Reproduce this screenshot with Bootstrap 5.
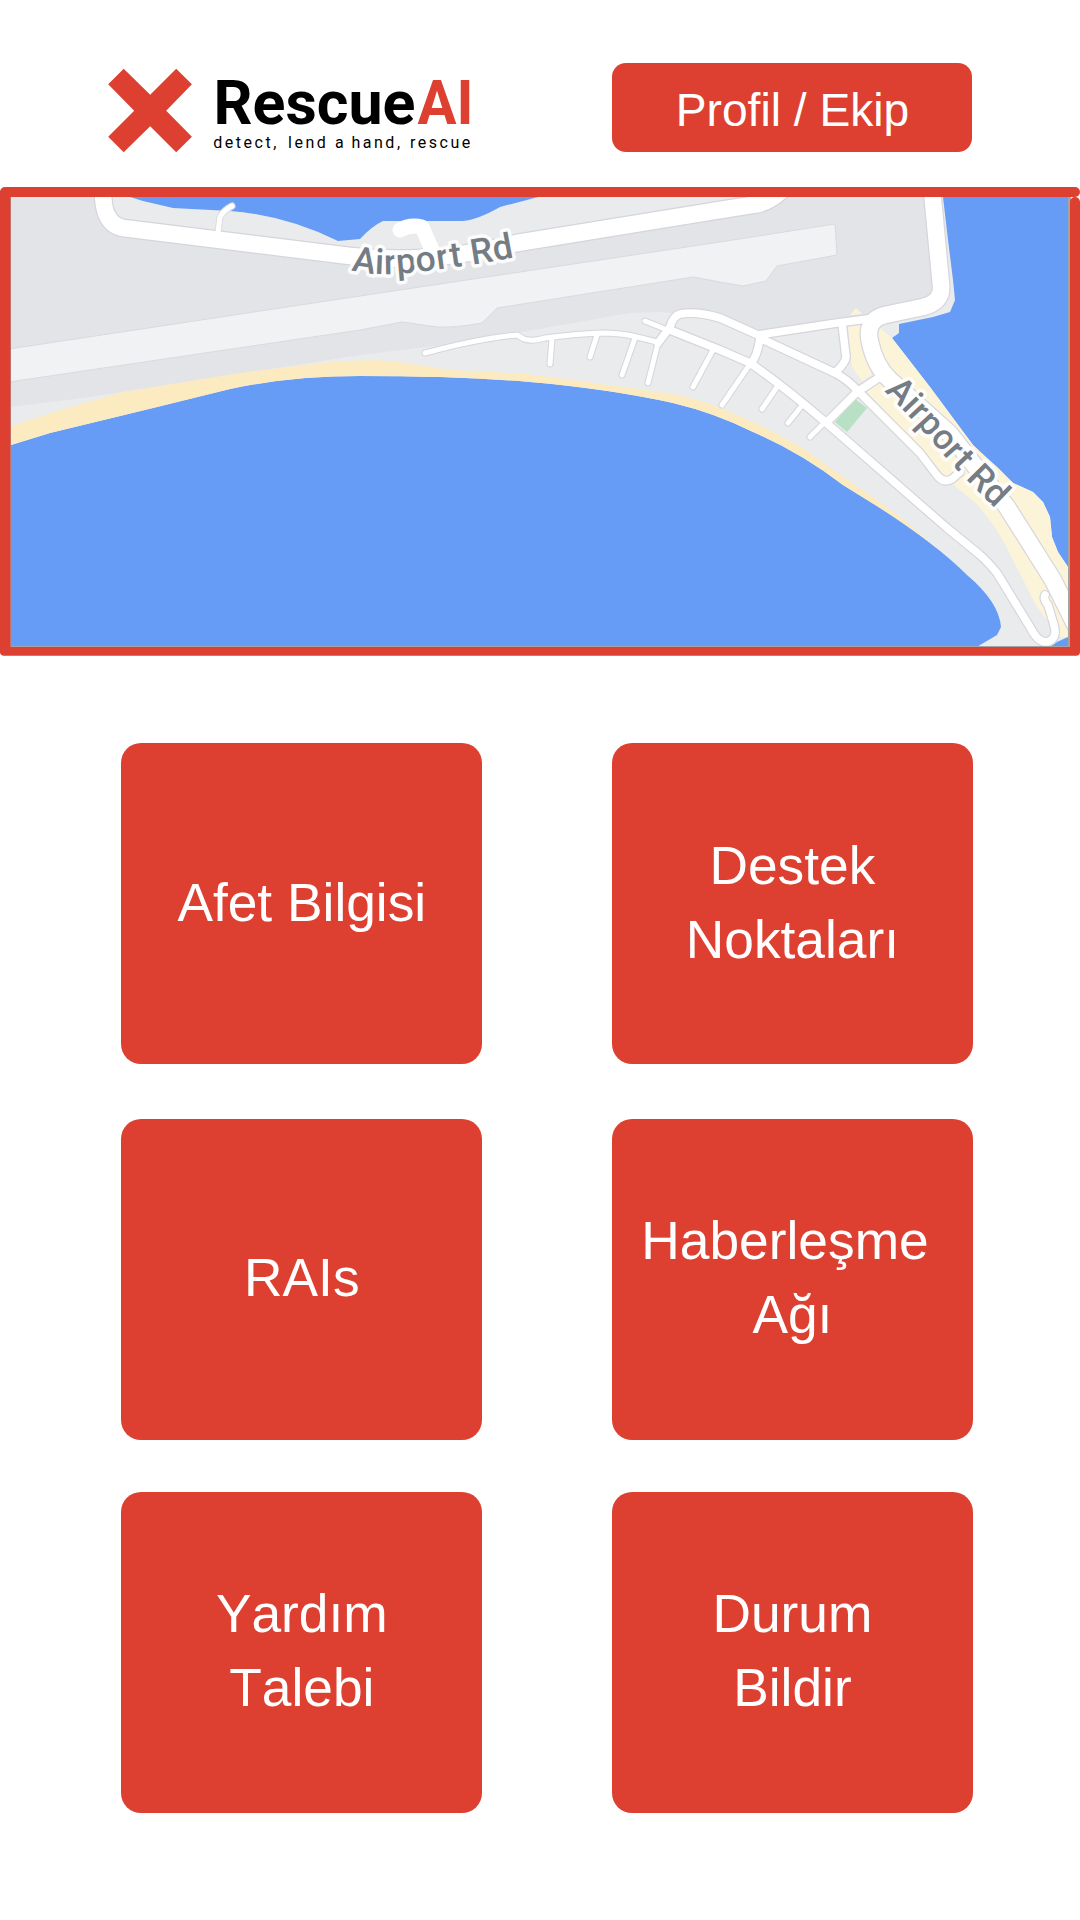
<!DOCTYPE html>
<html lang="tr">
<head>
<meta charset="utf-8">
<meta name="viewport" content="width=device-width, initial-scale=1">
<title>RescueAI</title>
<link href="https://cdn.jsdelivr.net/npm/bootstrap@5.3.0/dist/css/bootstrap.min.css" rel="stylesheet">
<style>
:root{--rescue:#dd4031}
body{font-family:"Liberation Sans",Arial,sans-serif;width:1080px;height:1920px;overflow:hidden}
.topbar{height:187px;padding:63px 108px 0}
.brand-logo{width:382px;height:90px;margin-top:5px;overflow:visible}
.btn-rescue{--bs-btn-color:#fff;--bs-btn-bg:var(--rescue);--bs-btn-border-width:0;--bs-btn-hover-bg:#c63527;--bs-btn-hover-color:#fff;--bs-btn-padding-x:0;--bs-btn-padding-y:0;--bs-btn-active-bg:#b92f22;font-kerning:none}
.btn-profile{width:360px;height:89.3px;font-size:46.2px;line-height:60px;--bs-btn-border-radius:14px;padding:4px 0 0 1px}
.map-view{height:469px}
.tiles{padding:87.3px 107.2px 0 121.4px}
.tile{width:360.8px;height:320.9px;font-size:53.3px;line-height:74px;--bs-btn-border-radius:20px;padding-bottom:2px}
.tile-row{margin-bottom:54.8px}
.tile-row + .tile-row{margin-bottom:52.100px}
</style>
</head>
<body class="bg-white">
<header class="topbar d-flex justify-content-between align-items-start">
<svg class="brand-logo" viewBox="108 68 382 90" role="img" aria-label="RescueAI">
<path fill="#dd4031" transform="translate(108.2 68.7)" d="M0 15.5 15.5 0 42 26 68 0 83.7 15.5 58 42 83.7 68 68 83.5 42 57.5 15.5 83.5 0 68 26 42Z"/>
<g font-family="Roboto, sans-serif">
<text y="124" font-weight="700" font-size="60.5"><tspan x="213.500" textLength="202" lengthAdjust="spacingAndGlyphs">Rescue</tspan><tspan x="417.5" fill="#dd4031" textLength="56" lengthAdjust="spacingAndGlyphs">AI</tspan></text>
<text y="147.7" font-size="16" letter-spacing="2.5"><tspan x="213.3">detect,</tspan> <tspan x="288">lend</tspan> <tspan x="335">a</tspan> <tspan x="351.500">hand,</tspan> <tspan x="410">rescue</tspan></text>
</g>
</svg>
<button class="btn btn-rescue btn-profile">Profil / Ekip</button>
</header>
<main>
<svg class="map-view d-block w-100" viewBox="0 187 1080 469">
<rect x="10" y="196" width="1060" height="452" fill="#669cf6"/>
<path fill="#e9ebed" d="M11 197H130L143 201 173 208 230 211Q285 215 338 241L360 239Q372 226 383 221H463Q477 220 500 207L538 197H943L948 240 953 280 955 300 950 312 933 317 899 324V333L892 338 930 387 973 445 987 459 997 467 1013 483 1033 492 1043 502 1050 517 1052 537 1058 552 1068 567V637L1057 642 1048 648H975L997 635 1001 627Q999 602 967 575 937 545 880 508L843 485Q800 452 753 432 715 413 673 403 610 389 530 382 460 376 360 376 290 376 230 389L153 408 50 433 11 445Z"/>
<path fill="#e3e4e8" d="M11 197H100L110 222 347 256 440 258 517 243 767 207 785 197H930L940 290 920 307 880 315 757 335 720 318 660 312 630 313 573 323 460 343 360 355 207 379 83 398 11 407Z"/>
<path fill="#f0f2f4" stroke="#d9dadf" d="M9 349 360 296 600 260 720 242 835 224 837 255 777 266 766 281 743 286 720 282 693 277 497 308 482 323Q455 328 437 327L402 322 360 330 9 382Z"/>
<path fill="#fcebc0" d="M11 426 67 408 123 392 240 373 320 363Q360 359 393 361L450 370 527 374 573 380 673 394Q697 399 720 408L760 425 803 448 830 468 867 493 907 522 938 549Q915 530 880 508L843 485Q800 452 753 432 715 413 673 403 610 389 530 382 460 376 360 376 290 376 230 389L153 408 50 433 11 445Z"/>
<g fill="#fcf4d9">
<path d="M880 328 892 338 930 387 973 445 997 467 1013 483 1033 492 1043 502 1050 517 1052 537 1058 552 1068 567V637H1060L1037 607 1013 560Q1000 532 987 517 975 500 957 488L927 457 867 392 880 380 870 350Z"/>
<path d="M848 327 863 324V353L872 375 862 381 852 367Z"/>
<path d="M856 308 862 314 850 315Z"/>
</g>
<path fill="#b8e0c4" d="M855 399 867 408 847 432 835 422Z"/>
<defs><g id="lanes" fill="none" stroke-linecap="round" stroke-linejoin="round">
<path d="M425 353Q480 338 517 335L524 339Q532 342 545 338 575 334 600 333 622 333 637 337L657 342M552 338 550 364M597 335 590 357M635 338 622 375M713 350 693 387M777 387 762 409M800 408 788 423M822 425 810 437M658 343 648 383M645 321 670 331M750 364 722 405"/></g>
<g id="streets" fill="none" stroke-linecap="round" stroke-linejoin="round">
<path d="M875 318 837 323 758 335 720 318Q697 311 680 314 673 316 670 327L658 343M670 330 720 350 750 363Q782 385 823 420L947 528 980 555Q988 562 997 573L1030 627Q1038 643 1047 642 1058 639 1054 625L1048 605Q1043 599 1045 595M760 338 835 373Q848 380 857 390L920 453 936 474Q943 484 952 479L960 472M880 377 857 392 827 422M842 323 846 357Q846 362 835 373M760 338Q757 358 750 364"/></g>
<g id="avenues" fill="none" stroke-linejoin="round">
<path d="M103 190Q103 208 107 215 112 226 123 228L350 256Q430 265 517 243L720 210 758 204Q769 202 782 190M932 190 941 285Q943 302 923 307L885 315Q865 320 870 342 875 366 890 380L950 434 1007 507 1053 580 1080 634"/></g></defs>
<path fill="none" stroke="#dddde2" stroke-width="7" stroke-linecap="round" stroke-linejoin="round" d="M218 232 220 217Q224 210 232 206"/>
<g stroke="#d5d5db"><use href="#lanes" stroke-width="7"/><use href="#streets" stroke-width="10"/><use href="#avenues" stroke-width="19"/></g>
<g stroke="#fff"><use href="#lanes" stroke-width="5"/><use href="#streets" stroke-width="7.6"/><use href="#avenues" stroke-width="16.6"/>
<path fill="none" stroke-width="5" stroke-linecap="round" d="M218 232 220 217Q224 210 232 206"/>
<path fill="none" stroke-width="15" stroke-linecap="round" stroke-linejoin="round" d="M400 230Q410 224 422 227L432 250"/></g>
<path id="airport-n" fill="none" d="M351 270C375 276 398 275 430 270.500S490 263 530 254"/>
<path id="airport-e" fill="none" d="M884 391Q918 425 942 453T1010 522"/>
<g font-family="Roboto, sans-serif" font-weight="500" font-size="35.5" fill="#747c84" stroke="#fff" stroke-opacity=".9" stroke-width="7" stroke-linejoin="round" paint-order="stroke">
<text><textPath href="#airport-n" textLength="165">Airport Rd</textPath></text>
<text><textPath href="#airport-e" textLength="162">Airport Rd</textPath></text>
</g>
<path fill="#a5a3a3" d="M1068 197h3v451h-3zM10 197h1v450h-1zM10 646h1060v1H10z"/>
<g fill="#dd4031"><rect y="187" width="1080" height="10" rx="5"/><rect y="191" width="10.500" height="462"/><rect x="1070" y="197" width="10" height="458" rx="5"/><rect y="647" width="1080" height="8.800" rx="4"/></g>
</svg>
<section class="tiles d-flex flex-column">
<div class="tile-row d-flex justify-content-between">
<button class="btn btn-rescue tile">Afet Bilgisi</button>
<button class="btn btn-rescue tile">Destek<br>Noktaları</button>
</div>
<div class="tile-row d-flex justify-content-between">
<button class="btn btn-rescue tile">RAIs</button>
<button class="btn btn-rescue tile">Haberleşme&nbsp;<br>Ağı</button>
</div>
<div class="tile-row d-flex justify-content-between">
<button class="btn btn-rescue tile">Yardım<br>Talebi</button>
<button class="btn btn-rescue tile">Durum<br>Bildir</button>
</div>
</section>
</main>
<script src="https://cdn.jsdelivr.net/npm/bootstrap@5.3.0/dist/js/bootstrap.bundle.min.js"></script>
</body>
</html>
